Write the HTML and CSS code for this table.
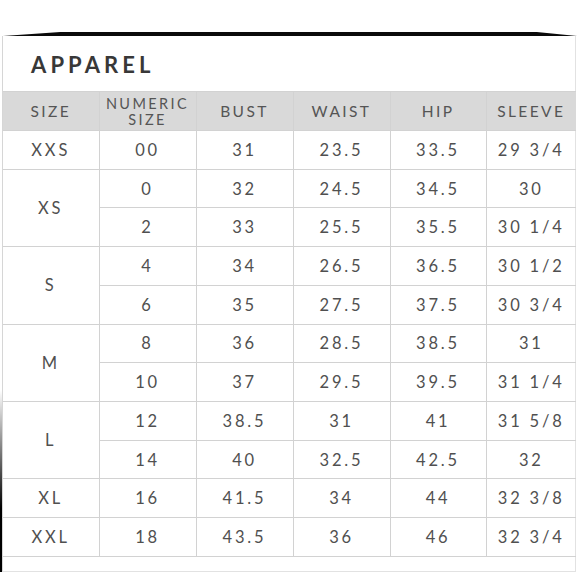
FILE: index.html
```html
<!DOCTYPE html>
<html>
<head>
<meta charset="utf-8">
<link rel="stylesheet" href="styles.css">
</head>
<body>
<div class="page">
  <div class="rule"></div>
  <div class="sheet">
    <div class="card">
      <h1 class="title">APPAREL</h1>
      <table class="chart">
        <colgroup>
          <col class="c1"><col class="c2"><col class="c3"><col class="c4"><col class="c5"><col class="c6">
        </colgroup>
        <thead>
          <tr><th class="sz">SIZE</th><th class="two">NUMERIC<br>SIZE</th><th>BUST</th><th>WAIST</th><th>HIP</th><th>SLEEVE</th></tr>
        </thead>
        <tbody>
          <tr><td class="sz">XXS</td><td>00</td><td>31</td><td>23.5</td><td>33.5</td><td>29 3/4</td></tr>
          <tr><td class="sz" rowspan="2">XS</td><td>0</td><td>32</td><td>24.5</td><td>34.5</td><td>30</td></tr>
          <tr><td>2</td><td>33</td><td>25.5</td><td>35.5</td><td>30 1/4</td></tr>
          <tr><td class="sz" rowspan="2">S</td><td>4</td><td>34</td><td>26.5</td><td>36.5</td><td>30 1/2</td></tr>
          <tr><td>6</td><td>35</td><td>27.5</td><td>37.5</td><td>30 3/4</td></tr>
          <tr><td class="sz" rowspan="2">M</td><td>8</td><td>36</td><td>28.5</td><td>38.5</td><td>31</td></tr>
          <tr><td>10</td><td>37</td><td>29.5</td><td>39.5</td><td>31 1/4</td></tr>
          <tr><td class="sz" rowspan="2">L</td><td>12</td><td>38.5</td><td>31</td><td>41</td><td>31 5/8</td></tr>
          <tr><td>14</td><td>40</td><td>32.5</td><td>42.5</td><td>32</td></tr>
          <tr><td class="sz">XL</td><td>16</td><td>41.5</td><td>34</td><td>44</td><td>32 3/8</td></tr>
          <tr><td class="sz">XXL</td><td>18</td><td>43.5</td><td>36</td><td>46</td><td>32 3/4</td></tr>
        </tbody>
      </table>
    </div>
  </div>
</div>
</body>
</html>
```

FILE: styles.css
```css
html, body {
  margin: 0;
  padding: 0;
  background: #ffffff;
}
.page {
  width: 580px;
  height: 580px;
  padding-top: 32px;
  box-sizing: border-box;
  font-family: Lato, "Open Sans", sans-serif;
  color: #454545;
}
.rule {
  margin: 0 3px 0 3px;
  height: 4px;
  background: #0a0a0a;
  clip-path: polygon(0 100%, 10% 0, 93% 0, 100% 100%);
}
.sheet {
  width: 577px;
  border-left: 2px solid transparent;
  border-image: linear-gradient(to bottom, rgba(0,0,0,0) 0%, rgba(0,0,0,0) 66%, #000 88%, #000 100%) 1;
}
.card {
  width: 574px;
  height: 536px;
  border-left: 1px solid #d6d6d6;
  border-right: 1px solid #e2e2e2;
  border-bottom: 1px solid #e2e2e2;
  box-sizing: border-box;
}
.title {
  margin: 0;
  padding: 16px 0 0 28px;
  font-size: 22px;
  line-height: 26px;
  font-weight: 700;
  letter-spacing: 4.1px;
  color: #383838;
}
.chart {
  margin-top: 13px;
  width: 573px;
  border-collapse: collapse;
  table-layout: fixed;
}
.c1 { width: 96px; }
.c2 { width: 97px; }
.c3 { width: 97px; }
.c4 { width: 97px; }
.c5 { width: 96px; }
.c6 { width: 90px; }
.chart th, .chart td {
  border: 1px solid #d2d2d2;
  text-align: center;
  vertical-align: middle;
  padding: 0;
}
.chart .sz { border-left: none; }
.chart tr > :last-child { border-right: none; }
.chart th {
  height: 37px;
  background: #d9d9d9;
  font-size: 15.5px;
  font-weight: 400;
  letter-spacing: 2.4px;
  color: #555555;
  line-height: 16px;
}
.chart th.two { font-size: 14.5px; line-height: 16px; padding-top: 1px; }
.chart td {
  height: 37.72px;
  font-size: 16.5px;
  letter-spacing: 2.8px;
  color: #505050;
}
```
